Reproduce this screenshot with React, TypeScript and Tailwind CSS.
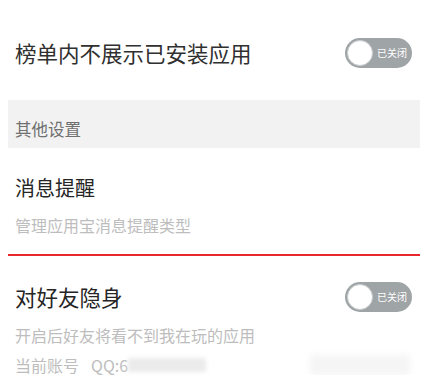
const font = { fontFamily: '"Noto Sans CJK SC", "Noto Sans", sans-serif' }

function OffSwitch() {
  return (
    <div className="flex h-[30px] w-[67px] shrink-0 items-center rounded-full bg-[#9fa4a7] pl-[2px]">
      <div className="h-[26px] w-[26px] rounded-full border border-[#c9cccd] bg-white" />
      <span className="ml-[4px] text-[10px] leading-none text-white">已关闭</span>
    </div>
  )
}

export default function App() {
  return (
    <div className="h-[375px] w-[423px] overflow-hidden bg-white pl-2 pr-[3px]" style={font}>
      <div className="flex h-[100px] items-center justify-between pl-[7px] pr-[8px] pt-[6px]">
        <span className="text-[21.5px] leading-7 text-[#303030]">榜单内不展示已安装应用</span>
        <OffSwitch />
      </div>

      <div className="flex h-[48px] items-center bg-[#f2f2f2] pl-[7px] pt-[10px]">
        <span className="text-[16.5px] leading-[22px] text-[#707070]">其他设置</span>
      </div>

      <div className="mt-[26px] pl-[7px]">
        <div className="text-[20px] leading-7 text-[#252525]">消息提醒</div>
        <div className="mt-[12px] text-[16px] leading-[22px] text-[#bdbdbd]">管理应用宝消息提醒类型</div>
      </div>
      <div className="mt-[18px] h-[2px] bg-[#e8262b]" />

      <div className="mt-[26px] flex items-center justify-between pl-[7px] pr-[8px]">
        <span className="text-[21.5px] leading-7 text-[#252525]">对好友隐身</span>
        <OffSwitch />
      </div>
      <div className="mt-[12px] pl-[7px] text-[16px] leading-[22px] text-[#bdbdbd]">开启后好友将看不到我在玩的应用</div>
      <div className="mt-[9px] flex items-center pl-[7px] text-[16px] leading-[20px] text-[#bdbdbd]">
        <span>当前账号</span>
        <span className="ml-[12px]">QQ:6</span>
        <span className="h-[14px] w-[78px] bg-[#ebebeb] blur-[2px]" />
        <span className="ml-auto mr-[10px] h-[20px] w-[100px] bg-[#f5f5f5] blur-[3px]" />
      </div>
    </div>
  )
}
